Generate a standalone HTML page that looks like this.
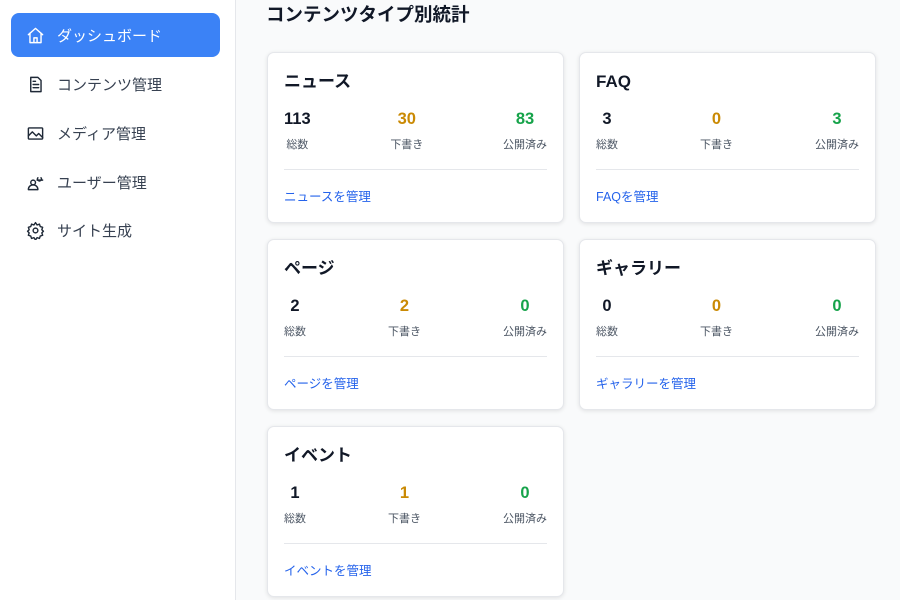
<!DOCTYPE html>
<html><head><meta charset="utf-8"><style>
*{box-sizing:border-box;margin:0;padding:0}
body{width:900px;height:600px;overflow:hidden;background:#f9fafb;font-family:"Liberation Sans","Noto Sans CJK JP",sans-serif;position:relative}
.side{position:absolute;left:0;top:0;width:236px;height:600px;background:#fff;border-right:1px solid #e5e7eb}
.item{position:absolute;left:11px;width:209px;height:44px;border-radius:8px;display:flex;align-items:center;padding-left:15px;font-size:15px;color:#374151}
.item svg{width:19px;height:19px;margin-right:12px;fill:none;stroke:#1f2937;stroke-width:1.8;stroke-linecap:round;stroke-linejoin:round}
.item.act{background:#3b82f6;color:#fff}
.item.act svg{stroke:#fff}
h1{position:absolute;left:266px;top:4px;font-size:18.5px;line-height:22px;font-weight:bold;color:#111827}
.card{position:absolute;width:297px;height:171px;background:#fff;border:1px solid #e5e7eb;border-radius:7px;box-shadow:0 1px 4px rgba(0,0,0,.1);padding:0 16px}
.card h2{font-size:17px;line-height:22px;font-weight:bold;color:#111827;margin-top:18px;height:22px}
.stats{display:flex;justify-content:space-between;margin-top:16px;text-align:center}
.n{font-size:16.5px;font-weight:bold;line-height:20px}
.l{font-size:11px;line-height:14px;color:#4b5563;margin-top:9px}
.y{color:#ca8a04}.g{color:#16a34a}.k{color:#111827}
.hr{border-top:1px solid #e5e7eb;margin-top:17px}
.lk{font-size:12.5px;line-height:16px;color:#2563eb;margin-top:19px}
</style></head><body>
<div class="side">
<div class="item act" style="top:13px"><svg viewBox="0 0 24 24"><path d="M3 11l9-8 9 8M5 9v12h14V9M10 21v-6h4v6"/></svg>ダッシュボード</div>
<div class="item" style="top:62px"><svg viewBox="0 0 24 24"><path d="M6 3h9l4 4v14H6zM9 12h7M9 16h7M9 8h3"/></svg>コンテンツ管理</div>
<div class="item" style="top:111px"><svg viewBox="0 0 24 24"><rect x="3" y="5" width="18" height="14" rx="1"/><path d="M3 15l5-5 5 5 3-3 5 5"/></svg>メディア管理</div>
<div class="item" style="top:160px"><svg viewBox="0 0 24 24"><circle cx="9" cy="12" r="3"/><path d="M3 21c0-4 3-6 6-6s6 2 6 6zM15 6a2.5 2.5 0 104 0M14 9h7"/></svg>ユーザー管理</div>
<div class="item" style="top:208px"><svg viewBox="0 0 24 24"><circle cx="12" cy="12" r="3"/><path d="M12 2l2 3 3-1 1 3 3 1-1 3 2 2-2 2 1 3-3 1-1 3-3-1-2 3-2-3-3 1-1-3-3-1 1-3-2-2 2-2-1-3 3-1 1-3 3 1z"/></svg>サイト生成</div>
</div>
<h1>コンテンツタイプ別統計</h1>
<div class="card" style="left:267px;top:52px"><h2>ニュース</h2><div class="stats"><div><div class="n k">113</div><div class="l">総数</div></div><div><div class="n y">30</div><div class="l">下書き</div></div><div><div class="n g">83</div><div class="l">公開済み</div></div></div><div class="hr"></div><div class="lk">ニュースを管理</div></div>
<div class="card" style="left:579px;top:52px"><h2>FAQ</h2><div class="stats"><div><div class="n k">3</div><div class="l">総数</div></div><div><div class="n y">0</div><div class="l">下書き</div></div><div><div class="n g">3</div><div class="l">公開済み</div></div></div><div class="hr"></div><div class="lk">FAQを管理</div></div>
<div class="card" style="left:267px;top:239px"><h2>ページ</h2><div class="stats"><div><div class="n k">2</div><div class="l">総数</div></div><div><div class="n y">2</div><div class="l">下書き</div></div><div><div class="n g">0</div><div class="l">公開済み</div></div></div><div class="hr"></div><div class="lk">ページを管理</div></div>
<div class="card" style="left:579px;top:239px"><h2>ギャラリー</h2><div class="stats"><div><div class="n k">0</div><div class="l">総数</div></div><div><div class="n y">0</div><div class="l">下書き</div></div><div><div class="n g">0</div><div class="l">公開済み</div></div></div><div class="hr"></div><div class="lk">ギャラリーを管理</div></div>
<div class="card" style="left:267px;top:426px"><h2>イベント</h2><div class="stats"><div><div class="n k">1</div><div class="l">総数</div></div><div><div class="n y">1</div><div class="l">下書き</div></div><div><div class="n g">0</div><div class="l">公開済み</div></div></div><div class="hr"></div><div class="lk">イベントを管理</div></div>
</body></html>
